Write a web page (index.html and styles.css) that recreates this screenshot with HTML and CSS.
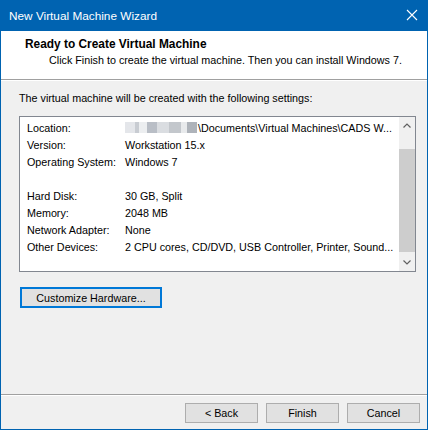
FILE: index.html
```html
<!DOCTYPE html>
<html lang="en">

<head>
    <title>New Virtual Machine Wizard</title>
    <link rel="stylesheet" href="styles.css">
</head>

<body>
    <div class="window">
        <div class="titlebar">
            <span class="title">New Virtual Machine Wizard</span>
            <svg class="close" width="12" height="12" viewBox="0 0 12 12">
                <path d="M1 1 L11 11 M11 1 L1 11" stroke="#fff" stroke-width="1.1" fill="none" />
            </svg>
        </div>

        <div class="header">
            <h1>Ready to Create Virtual Machine</h1>
            <p>Click Finish to create the virtual machine. Then you can install Windows 7.</p>
        </div>

        <div class="content">
            <p class="intro">The virtual machine will be created with the following settings:</p>

            <div class="summary">
                <div class="rows">
                    <div class="row"><span class="key">Location:</span><span class="val"><span class="masked"></span>\Documents\Virtual Machines\CADS W...</span></div>
                    <div class="row"><span class="key">Version:</span><span class="val">Workstation 15.x</span></div>
                    <div class="row"><span class="key">Operating System:</span><span class="val">Windows 7</span></div>
                    <div class="row"></div>
                    <div class="row"><span class="key">Hard Disk:</span><span class="val">30 GB, Split</span></div>
                    <div class="row"><span class="key">Memory:</span><span class="val">2048 MB</span></div>
                    <div class="row"><span class="key">Network Adapter:</span><span class="val">None</span></div>
                    <div class="row"><span class="key">Other Devices:</span><span class="val">2 CPU cores, CD/DVD, USB Controller, Printer, Sound...</span></div>
                </div>
                <div class="vscroll">
                    <div class="arrow">
                        <svg width="8" height="5" viewBox="0 0 8 5"><path d="M0.5 4.5 L4 1 L7.5 4.5" stroke="#606060" stroke-width="1.2" fill="none" /></svg>
                    </div>
                    <div class="track"><div class="thumb"></div></div>
                    <div class="arrow">
                        <svg width="8" height="5" viewBox="0 0 8 5"><path d="M0.5 0.5 L4 4 L7.5 0.5" stroke="#606060" stroke-width="1.2" fill="none" /></svg>
                    </div>
                </div>
            </div>

            <button class="btn btn-focus">Customize Hardware...</button>
        </div>

        <div class="footer">
            <button class="btn">&lt; Back</button>
            <button class="btn">Finish</button>
            <button class="btn">Cancel</button>
        </div>
    </div>
</body>

</html>
```

FILE: styles.css
```css
body { margin: 0; font-family: "Liberation Sans", Arial, sans-serif; font-size: 10.75px; color: #000; }
.window { width: 428px; height: 430px; box-sizing: border-box; border: 1px solid #0063b1; border-top: 0; background: #f0f0f0; display: flex; flex-direction: column; }

.titlebar { height: 31px; margin: 0 -1px; background: #0063b1; color: #fff; display: flex; align-items: center; justify-content: space-between; padding: 0 10px 0 9px; }
.title { font-size: 11.8px; }
.close { display: block; margin-top: -1px; }

.header { height: 49px; background: #fff; border-bottom: 1px solid #a0a0a0; box-sizing: border-box; padding: 5px 0 0 24px; }
.header h1 { margin: 0; font-size: 11.9px; font-weight: bold; line-height: 16px; }
.header p { margin: 0 0 0 24px; line-height: 16px; }

.content { flex: 1; border-top: 1px solid #fff; padding: 9px 0 0 18px; }
.intro { margin: 0; line-height: 16px; }

.summary { margin-top: 10px; width: 397px; height: 156px; box-sizing: border-box; border: 1px solid #828790; background: #fff; display: flex; }
.rows { flex: 1; padding: 3px 0 0 7px; }
.row { height: 17px; line-height: 17px; display: flex; white-space: nowrap; }
.key { width: 98px; }
.masked { display: inline-block; width: 72px; height: 11px; margin-right: 1px; vertical-align: -1px; filter: blur(0.6px);
  background: linear-gradient(90deg, #e4e6ea 0 10px, #c8ccd2 10px 14px, #eceef0 14px 22px, #b9bec6 22px 32px, #dadde1 32px 44px, #c3c7cc 44px 56px, #e8eaec 56px 62px, #aeb3ba 62px 72px); }

.vscroll { width: 16px; background: #f0f0f0; display: flex; flex-direction: column; }
.arrow { height: 17px; display: flex; align-items: center; justify-content: center; }
.arrow svg { display: block; }
.track { flex: 1; padding: 15px 0 2px; }
.thumb { height: 103px; background: #cdcdcd; }

.btn { font-family: "Liberation Sans", Arial, sans-serif; font-size: 10.75px; color: #000; background: #e1e1e1; border: 1px solid #adadad; padding: 0; height: 20px; width: 73px; line-height: 16px; }
.btn-focus { margin-top: 15px; margin-left: 1px; width: 142px; height: 21px; border: 2px solid #0078d7; }

.footer { height: 35px; box-sizing: border-box; border-top: 1px solid #a0a0a0; box-shadow: inset 0 1px 0 #fff; padding: 8px 7px 0 0; display: flex; justify-content: flex-end; gap: 8px; }
```
